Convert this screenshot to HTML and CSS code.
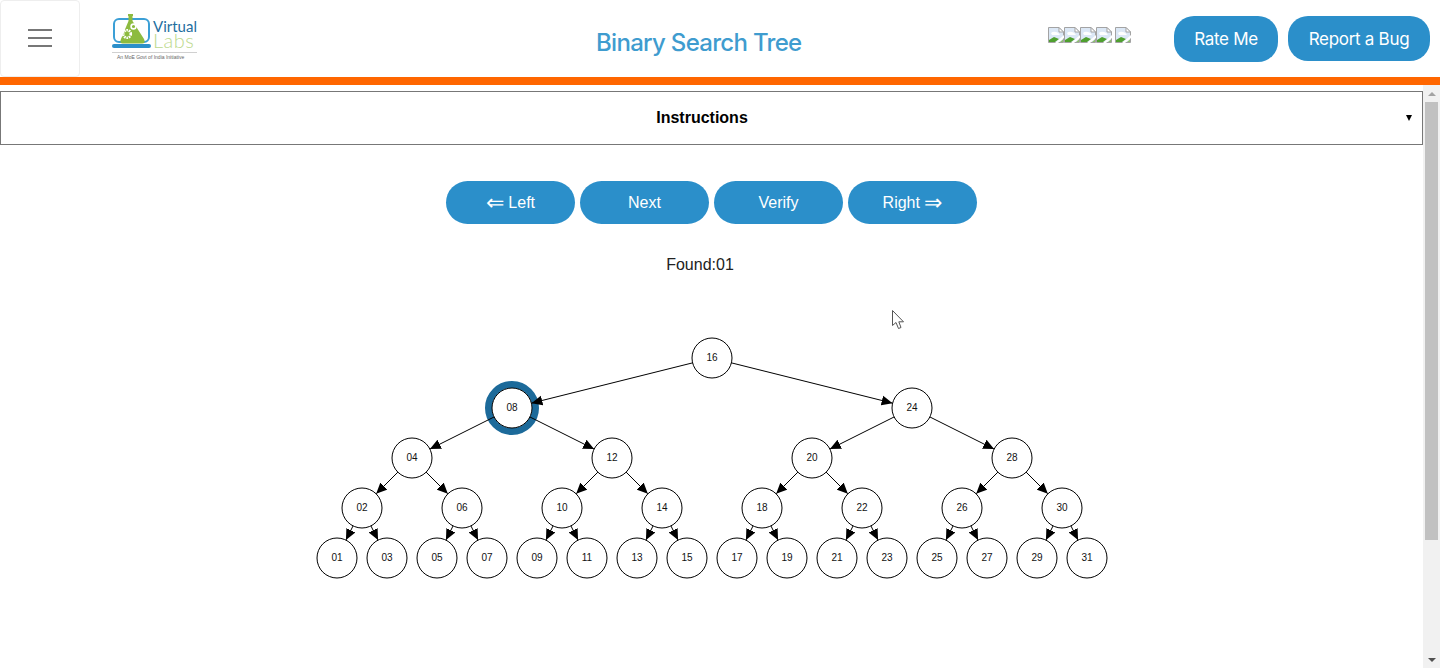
FILE: index.html
```html
<!DOCTYPE html>
<html>
<head>
    <meta charset="utf-8">
    <title>Binary Search Tree</title>
    <link rel="stylesheet" href="styles.css">
</head>
<body>
<svg class="hidden-defs" width="0" height="0">
    <defs>
        <marker id="seta" markerUnits="userSpaceOnUse" markerWidth="11" markerHeight="11" refX="11" refY="5.5" orient="auto">
            <path d="M0 0.5 L11 5.5 L0 10.5 Z" fill="#000"/>
        </marker>
        <symbol id="broken" viewBox="0 0 16 16">
            <path d="M0.5 0.5 H11 L15.5 5 V15.5 H0.5 Z" fill="#dce8f6" stroke="#a3a3a3"/>
            <path d="M11 0.5 V5 H15.5 Z" fill="#fff" stroke="#a3a3a3"/>
            <path d="M3 6 q2 -2 5 -1 q2 0 4 3 H4 Z" fill="#fff"/>
            <path d="M1 15 V13 L6 10 L11 12 L7 15 Z" fill="#4fa02f"/>
            <path d="M7 16 L16 8 V11 L10 16 Z" fill="#fff"/>
            <path d="M12 15 L15 12.5 V15 Z" fill="#8fc06f"/>
        </symbol>
    </defs>
</svg>

<header class="topbar">
    <div class="menu-btn">
        <span></span>
        <span></span>
        <span></span>
    </div>
    <svg class="logo" width="86" height="48" viewBox="0 0 86 48">
        <rect x="2" y="5" width="35" height="23" rx="5" fill="none" stroke="#3b9fd6" stroke-width="2"/>
        <rect x="0" y="30" width="39" height="4" rx="2" fill="#2b8fca"/>
        <path d="M16 0 H21 V2 H20.5 V7 L32 25 Q34 29.5 30 29.5 H11 Q7 29.5 9 25 L16.5 7 V2 H16 Z" fill="#8dbb3f"/>
        <circle cx="15" cy="20" r="3.8" fill="none" stroke="#fff" stroke-width="2.6" stroke-dasharray="1.6 0.8"/>
        <circle cx="21.5" cy="12.5" r="2.4" fill="none" stroke="#fff" stroke-width="1.6"/>
        <text class="logo-virtual" x="41" y="18">Virtual</text>
        <text class="logo-labs" x="41" y="34">Labs</text>
        <rect x="0" y="38" width="85" height="1" fill="#d0d0d0"/>
        <text class="logo-tag" x="5" y="45">An MoE Govt of India Initiative</text>
    </svg>
    <h1 class="titulo">Binary Search Tree</h1>
    <div class="estrelas">
        <svg width="16" height="16"><use href="#broken"/></svg>
        <svg width="16" height="16"><use href="#broken"/></svg>
        <svg width="16" height="16"><use href="#broken"/></svg>
        <svg width="16" height="16"><use href="#broken"/></svg>
        <svg class="ultima" width="16" height="16"><use href="#broken"/></svg>
    </div>
    <button type="button" class="top-btn rate">Rate Me</button>
    <button type="button" class="top-btn bug">Report a Bug</button>
</header>
<div class="faixa"></div>

<div class="pagina">
    <main class="conteudo">
        <div class="instrucoes">
            <span>Instructions</span>
            <i class="seta-baixo"></i>
        </div>
        <div class="botoes">
            <button type="button" class="btn"><span class="seta">&#8656;</span> Left</button>
            <button type="button" class="btn">Next</button>
            <button type="button" class="btn">Verify</button>
            <button type="button" class="btn">Right <span class="seta">&#8658;</span></button>
        </div>
        <p class="found">Found:01</p>
        <svg class="arvore" width="1423" height="280" viewBox="0 320 1423 280">
            <!-- no atual -->
            <circle class="atual" cx="512" cy="408" r="23.5"/>

            <g class="arestas">
                <line x1="712" y1="358" x2="531.4" y2="403.15"/>
                <line x1="712" y1="358" x2="892.6" y2="403.15"/>

                <line x1="512" y1="408" x2="429.9" y2="449.1"/>
                <line x1="512" y1="408" x2="594.1" y2="449.1"/>
                <line x1="912" y1="408" x2="829.9" y2="449.1"/>
                <line x1="912" y1="408" x2="994.1" y2="449.1"/>

                <line x1="412" y1="458" x2="376.14" y2="493.86"/>
                <line x1="412" y1="458" x2="447.86" y2="493.86"/>
                <line x1="612" y1="458" x2="576.14" y2="493.86"/>
                <line x1="612" y1="458" x2="647.86" y2="493.86"/>
                <line x1="812" y1="458" x2="776.14" y2="493.86"/>
                <line x1="812" y1="458" x2="847.86" y2="493.86"/>
                <line x1="1012" y1="458" x2="976.14" y2="493.86"/>
                <line x1="1012" y1="458" x2="1047.86" y2="493.86"/>

                <line x1="362" y1="508" x2="345.94" y2="540.11"/>
                <line x1="362" y1="508" x2="378.06" y2="540.11"/>
                <line x1="462" y1="508" x2="445.94" y2="540.11"/>
                <line x1="462" y1="508" x2="478.06" y2="540.11"/>
                <line x1="562" y1="508" x2="545.94" y2="540.11"/>
                <line x1="562" y1="508" x2="578.06" y2="540.11"/>
                <line x1="662" y1="508" x2="645.94" y2="540.11"/>
                <line x1="662" y1="508" x2="678.06" y2="540.11"/>
                <line x1="762" y1="508" x2="745.94" y2="540.11"/>
                <line x1="762" y1="508" x2="778.06" y2="540.11"/>
                <line x1="862" y1="508" x2="845.94" y2="540.11"/>
                <line x1="862" y1="508" x2="878.06" y2="540.11"/>
                <line x1="962" y1="508" x2="945.94" y2="540.11"/>
                <line x1="962" y1="508" x2="978.06" y2="540.11"/>
                <line x1="1062" y1="508" x2="1045.94" y2="540.11"/>
                <line x1="1062" y1="508" x2="1078.06" y2="540.11"/>
            </g>

            <g class="nos">
                <circle cx="712" cy="358" r="20"/>
                <circle cx="512" cy="408" r="20"/>
                <circle cx="912" cy="408" r="20"/>
                <circle cx="412" cy="458" r="20"/>
                <circle cx="612" cy="458" r="20"/>
                <circle cx="812" cy="458" r="20"/>
                <circle cx="1012" cy="458" r="20"/>
                <circle cx="362" cy="508" r="20"/>
                <circle cx="462" cy="508" r="20"/>
                <circle cx="562" cy="508" r="20"/>
                <circle cx="662" cy="508" r="20"/>
                <circle cx="762" cy="508" r="20"/>
                <circle cx="862" cy="508" r="20"/>
                <circle cx="962" cy="508" r="20"/>
                <circle cx="1062" cy="508" r="20"/>
                <circle cx="337" cy="558" r="20"/>
                <circle cx="387" cy="558" r="20"/>
                <circle cx="437" cy="558" r="20"/>
                <circle cx="487" cy="558" r="20"/>
                <circle cx="537" cy="558" r="20"/>
                <circle cx="587" cy="558" r="20"/>
                <circle cx="637" cy="558" r="20"/>
                <circle cx="687" cy="558" r="20"/>
                <circle cx="737" cy="558" r="20"/>
                <circle cx="787" cy="558" r="20"/>
                <circle cx="837" cy="558" r="20"/>
                <circle cx="887" cy="558" r="20"/>
                <circle cx="937" cy="558" r="20"/>
                <circle cx="987" cy="558" r="20"/>
                <circle cx="1037" cy="558" r="20"/>
                <circle cx="1087" cy="558" r="20"/>
            </g>

            <g class="rotulos">
                <text x="712" y="361">16</text>
                <text x="512" y="411">08</text>
                <text x="912" y="411">24</text>
                <text x="412" y="461">04</text>
                <text x="612" y="461">12</text>
                <text x="812" y="461">20</text>
                <text x="1012" y="461">28</text>
                <text x="362" y="511">02</text>
                <text x="462" y="511">06</text>
                <text x="562" y="511">10</text>
                <text x="662" y="511">14</text>
                <text x="762" y="511">18</text>
                <text x="862" y="511">22</text>
                <text x="962" y="511">26</text>
                <text x="1062" y="511">30</text>
                <text x="337" y="561">01</text>
                <text x="387" y="561">03</text>
                <text x="437" y="561">05</text>
                <text x="487" y="561">07</text>
                <text x="537" y="561">09</text>
                <text x="587" y="561">11</text>
                <text x="637" y="561">13</text>
                <text x="687" y="561">15</text>
                <text x="737" y="561">17</text>
                <text x="787" y="561">19</text>
                <text x="837" y="561">21</text>
                <text x="887" y="561">23</text>
                <text x="937" y="561">25</text>
                <text x="987" y="561">27</text>
                <text x="1037" y="561">29</text>
                <text x="1087" y="561">31</text>
            </g>
        </svg>
    </main>
    <aside class="barra">
        <div class="barra-seta"><i class="tri-cima"></i></div>
        <div class="barra-thumb"></div>
        <div class="barra-vazio"></div>
        <div class="barra-seta"><i class="tri-baixo"></i></div>
    </aside>
</div>

<!-- ponteiro do mouse -->
<svg class="cursor" width="13" height="20" viewBox="0 0 13 20">
    <path d="M0.5 0.5 V15.5 L4 12.5 L6.5 18.5 L9 17.5 L6.8 11.8 H11.5 Z" fill="#fff" stroke="#555" stroke-width="1"/>
</svg>
</body>
</html>
```
FILE: styles.css
```css
* {
    box-sizing: border-box;
}

html, body {
    margin: 0;
    height: 668px;
    overflow: hidden;
    background: #fff;
    font-family: "Liberation Sans", Arial, sans-serif;
}

.hidden-defs {
    display: block;
    height: 0;
}

/* topo */
.topbar {
    display: flex;
    align-items: flex-start;
    height: 77px;
    padding-right: 10px;
}

.menu-btn {
    display: flex;
    flex-direction: column;
    justify-content: center;
    gap: 6px;
    width: 80px;
    height: 77px;
    padding: 0 27px 1px;
    border: 1px solid #eee;
    border-radius: 4px;
}

.menu-btn span {
    display: block;
    height: 2px;
    background: #777;
}

.logo {
    margin: 14px 0 0 32px;
    flex: none;
}

.logo-virtual {
    font: 15px "Lato", sans-serif;
    fill: #1f6f9f;
}

.logo-labs {
    font: 300 20px "Lato", sans-serif;
    letter-spacing: 0.5px;
    fill: #bcd98d;
}

.logo-tag {
    font: 5px "Liberation Sans", sans-serif;
    fill: #666;
}

.titulo {
    margin: 26px 0 0 398px;
    font: 500 24px "Inter", sans-serif;
    letter-spacing: -0.7px;
    line-height: 34px;
    color: #3f9ccf;
    white-space: nowrap;
}

.estrelas {
    display: flex;
    margin: 27px 0 0 auto;
}

.estrelas .ultima {
    margin-left: 3px;
}

.top-btn {
    height: 46px;
    margin-top: 16px;
    border: 0;
    border-radius: 20px;
    background: #2b8fca;
    color: #fff;
    font: 17px "Inter", sans-serif;
    letter-spacing: -0.3px;
}

.rate {
    width: 104px;
    margin-left: 43px;
}

.bug {
    width: 142px;
    height: 45px;
    margin-left: 10px;
}

.faixa {
    height: 8px;
    background: #f60;
}

/* conteudo */
.pagina {
    display: flex;
    height: 583px;
}

.conteudo {
    flex: 1;
    min-width: 0;
    padding-top: 6px;
}

.instrucoes {
    display: flex;
    align-items: center;
    justify-content: center;
    height: 54px;
    padding-right: 19px;
    border: 1px solid #777;
    font-size: 16px;
    font-weight: bold;
    color: #000;
    position: relative;
}

.seta-baixo {
    position: absolute;
    right: 10px;
    top: 23px;
    border-left: 3.5px solid transparent;
    border-right: 3.5px solid transparent;
    border-top: 6px solid #000;
}

.botoes {
    display: flex;
    justify-content: center;
    gap: 5px;
    margin-top: 36px;
}

.btn {
    width: 129px;
    height: 43px;
    padding: 0;
    border: 0;
    border-radius: 22px;
    background: #2b8fca;
    color: #fff;
    font: 16px "Liberation Sans", "DejaVu Sans", sans-serif;
}

.seta {
    font-family: "DejaVu Sans", sans-serif;
    font-size: 22px;
    font-weight: 200;
    line-height: 0;
    vertical-align: -2px;
}

.found {
    margin: 32px 23px 0 0;
    text-align: center;
    font-size: 16px;
    line-height: 18px;
    color: #222;
}

.arvore {
    display: block;
    margin-top: 46px;
}

.atual {
    fill: none;
    stroke: #1c6a9a;
    stroke-width: 7;
}

.arestas line {
    stroke: #000;
    stroke-width: 1;
    marker-end: url(#seta);
}

.nos circle {
    fill: #fff;
    stroke: #000;
    stroke-width: 1;
}

.rotulos text {
    font: 10px "Liberation Sans", sans-serif;
    text-anchor: middle;
    fill: #111;
}

/* barra de rolagem */
.barra {
    display: flex;
    flex-direction: column;
    width: 17px;
    background: #f1f1f1;
}

.barra-seta {
    display: flex;
    align-items: center;
    justify-content: center;
    height: 17px;
    flex: none;
}

.barra-thumb {
    height: 438px;
    margin: 0 2px;
    background: #c1c1c1;
}

.barra-vazio {
    flex: 1;
}

.tri-cima {
    border-left: 4px solid transparent;
    border-right: 4px solid transparent;
    border-bottom: 4px solid #a3a3a3;
}

.tri-baixo {
    border-left: 4px solid transparent;
    border-right: 4px solid transparent;
    border-top: 4px solid #505050;
}

.cursor {
    position: absolute;
    left: 892px;
    top: 310px;
}
```
